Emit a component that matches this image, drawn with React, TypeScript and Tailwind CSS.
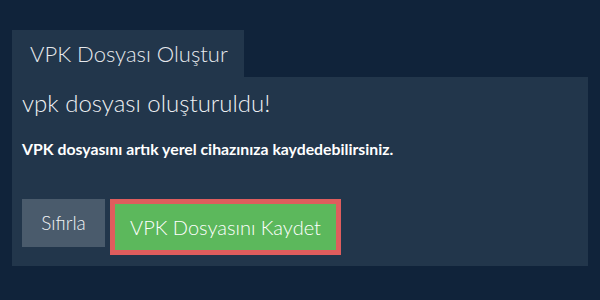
export default function App() {
  return (
    <div className="w-[600px] h-[300px] bg-[#10233a] pt-[30px] px-[12px] font-['Lato',sans-serif]">
      <div className="flex">
        <div className="bg-[#22364b] h-[47px] w-[232px] pl-[18px] flex items-center text-[22px] font-light text-[#e6e9ed]">
          VPK Dosyası Oluştur
        </div>
      </div>
      <div className="bg-[#22364b] h-[189px] px-[10px] pt-[10px]">
        <h2 className="text-[24px] leading-[32px] font-light text-[#eef0f3]">vpk dosyası oluşturuldu!</h2>
        <p className="mt-[18px] text-[15.8px] leading-[24px] font-bold text-white">
          VPK dosyasını artık yerel cihazınıza kaydedebilirsiniz.
        </p>
        <div className="mt-[38px] flex items-start gap-[5px]">
          <button className="h-[48px] w-[83px] bg-[#4a5b6c] text-[#f0f2f4] text-[19px] font-light">Sıfırla</button>
          <button className="h-[56px] w-[231px] border-[5px] border-[#df5d5d] bg-[#5cb85c] text-white text-[20px] font-light">
            VPK Dosyasını Kaydet
          </button>
        </div>
      </div>
    </div>
  );
}
